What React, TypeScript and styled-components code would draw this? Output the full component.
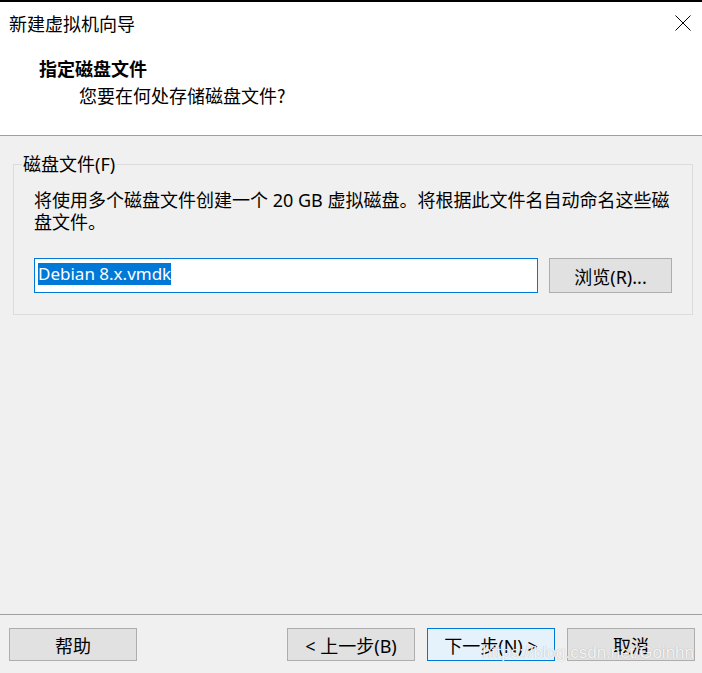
import styled, { createGlobalStyle } from "styled-components";

const GlobalStyle = createGlobalStyle`
  html, body {
    margin: 0;
    padding: 0;
    background: #f0f0f0;
  }
  body {
    font-family: "Noto Sans", "Noto Sans CJK SC", sans-serif;
    font-size: 18px;
    color: #000;
  }
`;

const Window = styled.div`
  position: relative;
  display: flex;
  flex-direction: column;
  height: 100vh;
  box-sizing: border-box;
  border-top: 2px solid #000;
  background: #f0f0f0;
  overflow: hidden;
`;

const Top = styled.div`
  background: #fff;
  border-bottom: 1px solid #a0a0a0;
`;

const TitleBar = styled.div`
  height: 42px;
  display: flex;
  align-items: center;
  justify-content: space-between;
  padding: 0 11px 0 9px;
`;

const Title = styled.span`
  font-family: "Noto Sans CJK SC", sans-serif;
  font-size: 18px;
  line-height: 24px;
`;

const CloseButton = styled.button`
  border: 0;
  background: transparent;
  padding: 0;
  width: 16px;
  height: 16px;
  display: flex;
  cursor: pointer;
`;

const Header = styled.div`
  padding: 12px 0 28px 39px;
`;

const Heading = styled.div`
  font-family: "Noto Sans CJK SC", sans-serif;
  font-weight: 700;
  font-size: 18px;
  line-height: 24px;
`;

const SubHeading = styled.div`
  font-family: "Noto Sans CJK SC", sans-serif;
  font-size: 18px;
  line-height: 24px;
  margin-top: 3px;
  padding-left: 40px;
`;

const Body = styled.div`
  flex: 1;
  padding: 18px 9px 0 13px;
`;

const Group = styled.fieldset`
  margin: 0;
  border: 1px solid #dcdcdc;
  padding: 15px 20px 21px 20px;
`;

const Legend = styled.legend`
  padding: 0 1px;
  margin-left: -12px;
  font-family: "Noto Sans", "Noto Sans CJK SC", sans-serif;
  font-size: 18px;
  line-height: 20px;
`;

const Description = styled.p`
  margin: 0;
  font-size: 18px;
  line-height: 22px;
  padding-right: 2px;
`;

const FileRow = styled.div`
  display: flex;
  align-items: stretch;
  gap: 11px;
  margin-top: 25px;
`;

const PathField = styled.div`
  flex: 1;
  height: 35px;
  box-sizing: border-box;
  border: 1px solid #0078d7;
  background: #fff;
  padding: 2px 3px;
`;

const Selected = styled.span`
  display: inline-block;
  background: #0078d7;
  color: #fff;
  font-size: 17px;
  line-height: 22px;
`;

const Button = styled.button<{ $primary?: boolean; $width?: number }>`
  width: ${(p) => p.$width ?? 128}px;
  height: 33px;
  box-sizing: border-box;
  border: 1px solid ${(p) => (p.$primary ? "#0078d7" : "#adadad")};
  background: ${(p) => (p.$primary ? "#e5f1fb" : "#e1e1e1")};
  font-family: "Noto Sans", "Noto Sans CJK SC", sans-serif;
  font-size: 18px;
  color: #000;
  padding: 0;
  display: flex;
  align-items: center;
  justify-content: center;
`;

const BrowseButton = styled(Button)`
  height: 35px;
`;

const Footer = styled.div`
  border-top: 1px solid #a0a0a0;
  padding: 13px 7px 12px 9px;
  display: flex;
  justify-content: space-between;
`;

const ButtonGroup = styled.div`
  display: flex;
  gap: 12px;
`;

const Watermark = styled.div`
  position: absolute;
  right: 8px;
  bottom: 10px;
  font-family: "Liberation Sans", Arial, sans-serif;
  font-size: 17px;
  color: rgba(255, 255, 255, 0.9);
  text-shadow: 0 0 1px rgba(110, 110, 110, 0.6);
  pointer-events: none;
`;

export default function App() {
  return (
    <>
      <GlobalStyle />
      <Window>
        <Top>
          <TitleBar>
            <Title>新建虚拟机向导</Title>
            <CloseButton aria-label="关闭">
              <svg width="16" height="16" viewBox="0 0 16 16">
                <path d="M0.5 0.5 L15.5 15.5 M15.5 0.5 L0.5 15.5" stroke="#000" strokeWidth="1" fill="none" />
              </svg>
            </CloseButton>
          </TitleBar>
          <Header>
            <Heading>指定磁盘文件</Heading>
            <SubHeading>您要在何处存储磁盘文件?</SubHeading>
          </Header>
        </Top>
        <Body>
          <Group>
            <Legend>磁盘文件(F)</Legend>
            <Description>
              将使用多个磁盘文件创建一个 20 GB 虚拟磁盘。将根据此文件名自动命名这些磁盘文件。
            </Description>
            <FileRow>
              <PathField>
                <Selected>Debian 8.x.vmdk</Selected>
              </PathField>
              <BrowseButton $width={123}>浏览(R)...</BrowseButton>
            </FileRow>
          </Group>
        </Body>
        <Footer>
          <Button>帮助</Button>
          <ButtonGroup>
            <Button>&lt; 上一步(B)</Button>
            <Button $primary>下一步(N) &gt;</Button>
            <Button>取消</Button>
          </ButtonGroup>
        </Footer>
        <Watermark>https://blog.csdn.net/Goinhn</Watermark>
      </Window>
    </>
  );
}
